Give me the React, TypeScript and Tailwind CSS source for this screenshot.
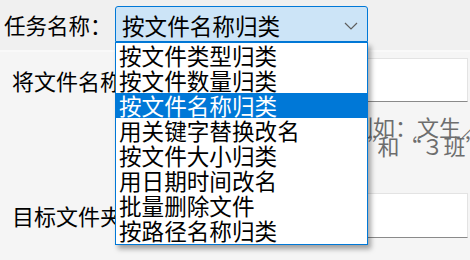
import React from "react";

const items = [
  "按文件类型归类",
  "按文件数量归类",
  "按文件名称归类",
  "用关键字替换改名",
  "按文件大小归类",
  "用日期时间改名",
  "批量删除文件",
  "按路径名称归类",
];

export default function App() {
  return (
    <div
      className="relative w-[470px] h-[260px] overflow-hidden bg-[#f5f5f5] text-black"
      style={{ fontFamily: '"Noto Sans CJK SC", "Noto Sans", sans-serif' }}
    >
      {/* top band */}
      <div className="h-[50px] bg-[#f0f0f0] flex items-start pl-[4px] pt-[6px]">
        <div className="h-[36px] w-[111px] flex items-center text-[21.5px] leading-[25px] whitespace-nowrap">
          任务名称：
        </div>
        <div className="h-[36px] w-[253px] flex items-center justify-between pl-[6px] pr-[9px] bg-[#cce4f7] border border-[#0078d7] rounded-t-[3px]">
          <span className="text-[22.6px] leading-[25px] pt-[3px] whitespace-nowrap">按文件名称归类</span>
          <svg width="14" height="8" viewBox="0 0 14 8" className="mt-[4px]">
            <path d="M1 1 L7 7 L13 1" fill="none" stroke="#5f5f5f" strokeWidth="1.2" />
          </svg>
        </div>
      </div>

      <div className="border-t-2 border-[#f9f9f9] pt-[6px]">
        {/* row 2 */}
        <div className="flex items-center h-[44px] pl-[12px] pr-[2px]">
          <div className="w-[160px] text-[22px] leading-[25px] whitespace-nowrap">将文件名称中的</div>
          <div className="flex-1 h-[44px] bg-white border border-[#e3e3e3] border-b-[#8a8a8a]" />
        </div>

        {/* hint text */}
        <div className="h-[91px] pt-[15px] text-[22px] leading-[19px] text-[#6d6d6d] whitespace-nowrap [font-feature-settings:'fwid']">
          <div className="pl-[153px]">关键字用逗号隔开，例如：文生/男生</div>
          <div className="pl-[235px]">
            替换为“男生<span className="[font-feature-settings:'pwid']">”</span>和“3班”
          </div>
        </div>

        {/* row 4 */}
        <div className="flex items-center h-[45px] pl-[12px] pr-[2px]">
          <div className="w-[160px] text-[22px] leading-[25px] whitespace-nowrap">目标文件夹：</div>
          <div className="flex-1 h-[45px] bg-white border border-[#e3e3e3] border-b-[#8a8a8a]" />
        </div>
      </div>

      {/* dropdown list */}
      <div className="absolute left-[115px] top-[42px] w-[253px] bg-white border border-[#0078d7] pb-[1px] shadow-[3px_4px_5px_rgba(0,0,0,0.35)]">
        {items.map((t, i) => (
          <div
            key={t}
            className={
              i === 2
                ? "h-[25px] leading-[25px] pl-[3px] text-[22.6px] whitespace-nowrap bg-[#0078d7] text-white"
                : "h-[25px] leading-[25px] pl-[3px] text-[22.6px] whitespace-nowrap"
            }
          >
            {t}
          </div>
        ))}
      </div>
    </div>
  );
}
